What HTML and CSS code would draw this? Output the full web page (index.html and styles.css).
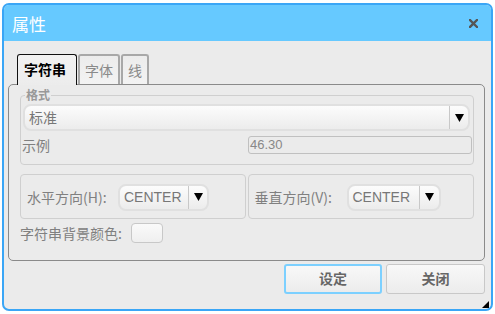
FILE: index.html
```html
<!DOCTYPE html>
<html lang="zh">
<head>
    <meta charset="UTF-8">
    <title>属性</title>
    <link rel="stylesheet" href="styles.css">
</head>
<body>
    <div class="dialog">
        <div class="titlebar">
            <span class="title">属性</span>
            <svg class="close" width="9" height="9" viewBox="0 0 9 9">
                <path d="M1 1 L8 8 M8 1 L1 8" stroke="#555" stroke-width="2.4" stroke-linecap="square"/>
            </svg>
        </div>

        <div class="body">
            <div class="tabs">
                <div class="tab active">字符串</div>
                <div class="tab">字体</div>
                <div class="tab">线</div>
            </div>

            <div class="panel">
                <fieldset class="group format">
                    <legend>格式</legend>
                    <div class="select wide">
                        <span class="value">标准</span>
                        <span class="arrow"><svg width="9" height="8" viewBox="0 0 9 8"><path d="M0 0 H9 L4.5 8 Z" fill="#000"/></svg></span>
                    </div>
                    <div class="sample-row">
                        <span class="label">示例</span>
                        <div class="sample">46.30</div>
                    </div>
                </fieldset>

                <div class="align-row">
                    <fieldset class="group align">
                        <span class="label h-label">水平方向(H):</span>
                        <div class="select small">
                            <span class="value">CENTER</span>
                            <span class="arrow"><svg width="9" height="8" viewBox="0 0 9 8"><path d="M0 0 H9 L4.5 8 Z" fill="#000"/></svg></span>
                        </div>
                    </fieldset>
                    <fieldset class="group align">
                        <span class="label v-label">垂直方向(V):</span>
                        <div class="select small v-select">
                            <span class="value">CENTER</span>
                            <span class="arrow"><svg width="9" height="8" viewBox="0 0 9 8"><path d="M0 0 H9 L4.5 8 Z" fill="#000"/></svg></span>
                        </div>
                    </fieldset>
                </div>

                <div class="color-row">
                    <span class="label color-label">字符串背景颜色:</span>
                    <div class="swatch"></div>
                </div>
            </div>

            <div class="buttons">
                <button class="btn focused">设定</button>
                <button class="btn close-btn">关闭</button>
            </div>
        </div>

        <div class="grip"></div>
    </div>
</body>
</html>
```

FILE: styles.css
```css
* {
    box-sizing: border-box;
}

body {
    margin: 0;
    background-color: #fff;
    font-family: "Noto Sans CJK SC", "Liberation Sans", sans-serif;
}

.dialog {
    position: relative;
    width: 491px;
    height: 308px;
    margin: 3px 0 0 2px;
    border: 2px solid #3aa6f6;
    border-radius: 7px;
    background-color: #ebebeb;
    overflow: hidden;
}

.titlebar {
    height: 36px;
    background-color: #66c9ff;
    display: flex;
    align-items: center;
    justify-content: space-between;
    padding: 0 13px 0 8px;
}

.title {
    color: #fff;
    font-size: 17px;
    line-height: 20px;
    margin-top: 1px;
}

.close {
    display: block;
    margin-top: 1px;
}

.body {
    padding: 13px 6px 0 4px;
}

.tabs {
    display: flex;
    margin-left: 9px;
    height: 30px;
}

.tab {
    height: 30px;
    border: 2px solid #a8a8a8;
    border-bottom: none;
    border-radius: 3px 3px 0 0;
    background: linear-gradient(#ececec, #f3f3f3);
    color: #8a8a8a;
    font-size: 14px;
    line-height: 28px;
    padding: 0 5px;
    margin-right: 1px;
}

.tab.active {
    position: relative;
    z-index: 1;
    height: 31px;
    border: 1px solid #111;
    border-bottom: none;
    color: #000;
    font-weight: bold;
    padding: 0 6px;
    width: 60px;
    background: linear-gradient(#f2f2f2, #ececec);
}

.panel {
    height: 177px;
    border: 1px solid #8a8a8a;
    border-radius: 5px;
    padding: 4px 10px 0 11px;
}

.group {
    margin: 0;
    border: 1px solid #cfcfcf;
    border-radius: 4px;
    padding: 0;
}

.group legend {
    font-size: 12px;
    line-height: 12px;
    color: #999;
    font-weight: bold;
    padding: 0 1px;
    margin-left: 3px;
}

.format {
    padding: 3px 1px 10px 1px;
}

.select {
    display: flex;
    align-items: stretch;
    height: 27px;
    border: 2px solid #e0e0e0;
    border-radius: 8px;
    background: linear-gradient(#fcfcfc, #ececec);
    color: #777;
}

.select .value {
    flex-grow: 1;
    line-height: 23px;
    padding-left: 4px;
}

.select .arrow {
    width: 19px;
    border-left: 1px solid #c8c8c8;
    display: flex;
    align-items: center;
    justify-content: center;
}

.select .arrow svg {
    display: block;
    margin-left: 1px;
}

.wide {
    margin: 0 2px 0 1px;
    font-size: 14px;
}

.sample-row {
    display: flex;
    align-items: center;
    margin-top: 5px;
}

.label {
    color: #808080;
    font-size: 14px;
    white-space: nowrap;
}

.sample-row .label {
    width: 226px;
    line-height: 18px;
}

.sample {
    flex-grow: 1;
    height: 18px;
    border: 1px solid #c0c0c0;
    border-radius: 3px;
    color: #888;
    font-family: "Liberation Sans", sans-serif;
    font-size: 13px;
    line-height: 16px;
    padding-left: 1px;
}

.align-row {
    display: flex;
    gap: 2px;
    margin-top: 9px;
}

.align {
    display: flex;
    align-items: center;
    height: 45px;
    padding: 0 0 0 6px;
}

.align:first-child {
    width: 226px;
}

.align:last-child {
    width: 227px;
}

.h-label {
    width: 91px;
}

.v-label {
    width: 92px;
}

.small {
    width: 91px;
    margin-top: 1px;
    font-family: "Liberation Sans", sans-serif;
    font-size: 14px;
}

.small .value {
    padding-left: 4px;
}

.v-select {
    width: 94px;
}

.v-select .arrow {
    width: 20px;
}

.color-row {
    display: flex;
    align-items: center;
    margin-top: 4px;
}

.color-label {
    width: 111px;
}

.swatch {
    width: 32px;
    height: 20px;
    border: 1px solid #c8c8c8;
    border-radius: 4px;
    background: linear-gradient(#fafafa, #efefef);
}

.buttons {
    display: flex;
    justify-content: flex-end;
    gap: 4px;
    margin-top: 3px;
}

.btn {
    width: 98px;
    height: 30px;
    border: 1px solid #c8c8c8;
    border-radius: 3px;
    background: linear-gradient(#f8f8f8, #ececec);
    color: #666;
    font-family: "Noto Sans CJK SC", sans-serif;
    font-size: 14px;
    font-weight: bold;
    line-height: 24px;
    padding: 0 0 2px;
}

.btn.focused {
    border: 2px solid #7cd0ff;
}

.close-btn {
    width: 99px;
}

.grip {
    position: absolute;
    right: 2px;
    bottom: 1px;
    width: 0;
    height: 0;
    border-left: 7px solid transparent;
    border-bottom: 7px solid #000;
}
```
